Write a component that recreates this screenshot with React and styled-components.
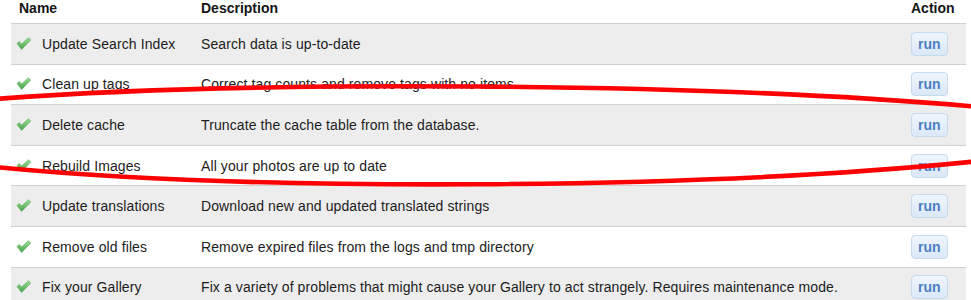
import React from "react";
import styled, { createGlobalStyle } from "styled-components";

const GlobalStyle = createGlobalStyle`
  html, body { margin: 0; padding: 0; background: #ffffff; }
  body {
    font-family: "Liberation Sans", Arial, Helvetica, sans-serif;
    font-size: 14px;
    color: #1c1c1c;
    overflow: hidden;
  }
`;

const Page = styled.div`
  position: relative;
  width: 971px;
  height: 300px;
  overflow: hidden;
`;

const Table = styled.div`
  margin-left: 11px;
  width: 955px;
`;

const Row = styled.div`
  display: grid;
  grid-template-columns: 182px 1fr 63px;
  box-sizing: border-box;
  height: ${(p) => (p.$header ? "24px" : "40.6px")};
  border-bottom: 1px solid #d0d0d0;
  background: ${(p) => (p.$shaded ? "#ededed" : "#ffffff")};
  align-items: ${(p) => (p.$header ? "start" : "center")};
`;

const HeadCell = styled.div`
  font-weight: bold;
  line-height: 16px;
  color: #151515;
  padding: 0 8px;
  white-space: nowrap;
`;

const NameCell = styled.div`
  display: flex;
  align-items: center;
  gap: 10px;
  padding-left: 5px;
  line-height: 16px;
  letter-spacing: 0.1px;
  white-space: nowrap;
`;

const DescCell = styled.div`
  padding: 0 8px;
  line-height: 16px;
  letter-spacing: 0.1px;
  white-space: nowrap;
`;

const ActionCell = styled.div`
  padding: 0 8px;
  display: flex;
  align-items: center;
`;

const RunButton = styled.button`
  display: inline-flex;
  align-items: center;
  justify-content: center;
  box-sizing: border-box;
  height: 24px;
  padding: 0 6px;
  margin: 0;
  border: 1px solid #c6daef;
  border-radius: 4px;
  background: linear-gradient(#eef5fd, #dbe8f8);
  color: #4d7fc1;
  font-family: "Liberation Sans", Arial, sans-serif;
  font-size: 14px;
  font-weight: bold;
  line-height: 16px;
  cursor: pointer;
`;

const Overlay = styled.svg`
  position: absolute;
  left: 0;
  top: 0;
  pointer-events: none;
`;

const CheckIcon = () => (
  <svg width="16" height="16" viewBox="0 0 16 16" style={{ flex: "none" }}>
    <defs>
      <linearGradient id="chk" x1="0" y1="0" x2="0" y2="1">
        <stop offset="0" stopColor="#9ddc9d" />
        <stop offset="1" stopColor="#46a346" />
      </linearGradient>
    </defs>
    <path
      d="M1 7.6 L3.2 5.4 L5.6 8 L12.5 1.8 L14.8 4 L5.6 13.4 Z"
      fill="url(#chk)"
      stroke="#56a856"
      strokeWidth="0.6"
      strokeLinejoin="round"
    />
  </svg>
);

const tasks = [
  ["Update Search Index", "Search data is up-to-date"],
  ["Clean up tags", "Correct tag counts and remove tags with no items"],
  ["Delete cache", "Truncate the cache table from the database."],
  ["Rebuild Images", "All your photos are up to date"],
  ["Update translations", "Download new and updated translated strings"],
  ["Remove old files", "Remove expired files from the logs and tmp directory"],
  [
    "Fix your Gallery",
    "Fix a variety of problems that might cause your Gallery to act strangely. Requires maintenance mode.",
  ],
];

export default function App() {
  return (
    <>
      <GlobalStyle />
      <Page>
        <Table>
          <Row $header>
            <HeadCell>Name</HeadCell>
            <HeadCell>Description</HeadCell>
            <HeadCell>Action</HeadCell>
          </Row>
          {tasks.map(([name, desc], i) => (
            <Row key={name} $shaded={i % 2 === 0}>
              <NameCell>
                <CheckIcon />
                {name}
              </NameCell>
              <DescCell>{desc}</DescCell>
              <ActionCell>
                <RunButton>run</RunButton>
              </ActionCell>
            </Row>
          ))}
        </Table>
        <Overlay width="971" height="300" viewBox="0 0 971 300">
          <path
            d="M -5 99 C 250 80, 700 82, 980 107"
            fill="none"
            stroke="#ff0000"
            strokeWidth="4.6"
            strokeLinecap="round"
          />
          <path
            d="M -5 167 C 250 192, 700 190, 980 161"
            fill="none"
            stroke="#ff0000"
            strokeWidth="4.6"
            strokeLinecap="round"
          />
        </Overlay>
      </Page>
    </>
  );
}
